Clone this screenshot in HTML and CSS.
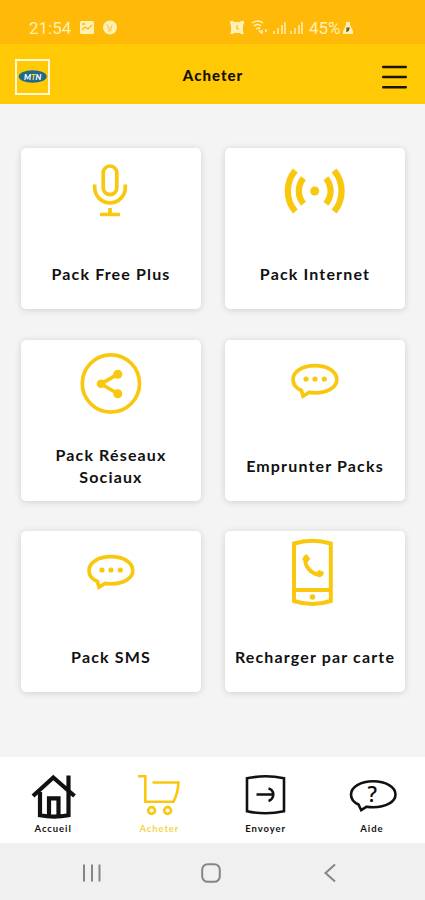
FILE: index.html
```html
<!DOCTYPE html>
<html lang="fr">
<head>
    <meta charset="UTF-8">
    <meta name="viewport" content="width=device-width, initial-scale=1.0">
    <title>Acheter</title>
    <link rel="stylesheet" href="styles.css">
</head>
<body>

    <div class="status-bar">
        <span class="time">21:54</span>
        <svg class="status-left" width="40" height="16" viewBox="0 0 40 16">
            <rect x="1" y="1" width="14" height="13" rx="1.5" fill="currentColor"/>
            <path d="M3 10l3-3 3 2 4-4M3 4h3" fill="none" stroke="#ffb908" stroke-width="1.3"/>
            <circle cx="31" cy="7.5" r="7" fill="currentColor"/>
            <path d="M28 4l2 5 2-1 1-3M29 11l4-1" fill="none" stroke="#ffd060" stroke-width="1.5"/>
        </svg>
        <svg class="status-right" width="78" height="16" viewBox="0 0 78 16">
            <path d="M1 1h3l1 1h6l1-1h3v3l-1 1v7l1 2h-3l-1-1H5l-1 1H1l1-2V5L1 4z" fill="currentColor"/>
            <path d="M8 5v4h2" fill="none" stroke="#ffb908" stroke-width="1.2"/>
            <path d="M23 3q6-4 11 0M25 6q4-3 7 0M27 9q3-2 4 0M30 10l2 3" fill="none" stroke="currentColor" stroke-width="1.5"/>
            <path d="M33 10v4M37 9v3M45 11v3M49 8v6M53 5v9M56 2v12M62 11v3M66 8v6M70 5v9M73 2v12" stroke="currentColor" stroke-width="1.5"/>
        </svg>
        <span class="battery">45%</span>
        <svg width="12" height="14" viewBox="0 0 12 14">
            <path d="M4 1h4v3l3 6v3H1v-3l3-6z" fill="currentColor"/>
            <path d="M5 11V7h2l-1 3" fill="none" stroke="#5b4b10" stroke-width="1.2"/>
        </svg>
    </div>

    <header class="header">
        <svg class="logo" width="35" height="36" viewBox="0 0 35 36">
            <rect x="1" y="1" width="33" height="34" fill="none" stroke="#fff8d8" stroke-width="2"/>
            <ellipse cx="17.7" cy="17.5" rx="14" ry="6.2" fill="#1f6a8c"/>
            <text class="logo-text" x="17.7" y="20.5" text-anchor="middle">M<tspan fill="#f5d34a">T</tspan>N</text>
        </svg>
        <h1 class="title">Acheter</h1>
        <svg class="menu" width="25" height="26" viewBox="0 0 25 26">
            <path d="M1.2 3h22.6M1.2 13h22.6M1.2 23.3h22.6" stroke="#1b1400" stroke-width="2.4" stroke-linecap="round"/>
        </svg>
    </header>

    <main class="packs">
        <div class="card">
            <svg class="card-icon" viewBox="0 0 80 80">
                <rect x="32.2" y="18" width="13.6" height="28.6" rx="6.8"/>
                <path d="M23.7 36.5v3a15.3 15.3 0 0 0 30.6 0v-3M39 60v6M29 66.5h20"/>
            </svg>
            <div class="label">Pack Free Plus</div>
        </div>
        <div class="card">
            <svg class="card-icon wifi" viewBox="0 0 80 80">
                <path d="M20.3 22.5a31.8 31.8 0 0 0 0 41M28.5 30.3a19.6 19.6 0 0 0 0 25.4M59.1 22.5a31.8 31.8 0 0 1 0 41M50.9 30.3a19.6 19.6 0 0 1 0 25.4"/>
                <circle class="fill" cx="39.7" cy="43" r="4.5"/>
            </svg>
            <div class="label">Pack Internet</div>
        </div>
        <div class="card">
            <svg class="card-icon" viewBox="0 0 80 80">
                <circle cx="39.9" cy="43.5" r="28.6"/>
                <path d="M46.4 34.3L30 43.8l16.4 9.7"/>
                <circle class="fill" cx="30" cy="43.8" r="4.3"/>
                <circle class="fill" cx="46.8" cy="34.3" r="4.5"/>
                <circle class="fill" cx="46.8" cy="53.7" r="4.5"/>
            </svg>
            <div class="label">Pack Réseaux<br>Sociaux</div>
        </div>
        <div class="card">
            <svg class="card-icon" viewBox="0 0 80 80">
                <path d="M26.5 50.5C21 48.2 18 44.4 18 39.5c0-8 9.5-13.8 22-13.8s21.8 5.8 21.8 13.8S52.5 52.8 40 52.8q-3 0-6-.4l-6 3.8z"/>
                <circle class="fill" cx="31" cy="39" r="2.6"/>
                <circle class="fill" cx="40" cy="39" r="2.6"/>
                <circle class="fill" cx="49.3" cy="39" r="2.6"/>
            </svg>
            <div class="label">Emprunter Packs</div>
        </div>
        <div class="card">
            <svg class="card-icon" viewBox="0 0 80 80">
                <path d="M26.5 50.5C21 48.2 18 44.4 18 39.5c0-8 9.5-13.8 22-13.8s21.8 5.8 21.8 13.8S52.5 52.8 40 52.8q-3 0-6-.4l-6 3.8z"/>
                <circle class="fill" cx="31" cy="39" r="2.6"/>
                <circle class="fill" cx="40" cy="39" r="2.6"/>
                <circle class="fill" cx="49.3" cy="39" r="2.6"/>
            </svg>
            <div class="label">Pack SMS</div>
        </div>
        <div class="card">
            <svg class="card-icon phone" viewBox="0 0 80 80">
                <path d="M19 12.5Q37.5 7 55.8 12.5V70Q37.5 76 19 70zM19 59h37"/>
                <circle class="fill" cx="37.5" cy="66" r="2.8"/>
                <path d="M31.5 28C27.5 33 37 45 46 43.5"/>
                <path class="fill" d="M27 29l2-4.5 3-1.2 3.2 4.5-3 4zM40.5 42l3.5-3 5 2-1 3.5-4 2z"/>
            </svg>
            <div class="label">Recharger par carte</div>
        </div>
    </main>

    <nav class="tabs">
        <a class="tab">
            <svg class="tab-icon home" viewBox="0 0 60 50">
                <path d="M10 26L30.3 7.5 51.5 26M17 22v23.3q14 2.5 28.5 0V5.5M26 46V28.3h9.5V46"/>
            </svg>
            Accueil
        </a>
        <a class="tab active">
            <svg class="tab-icon" viewBox="0 0 60 50">
                <path d="M9 6.3h7.3v25.4h28.2q4.5-9 5-19.2H23.500"/>
                <circle cx="22.6" cy="40.5" r="3.4"/>
                <circle cx="38.6" cy="40.5" r="3.4"/>
            </svg>
            Acheter
        </a>
        <a class="tab">
            <svg class="tab-icon" viewBox="0 0 60 50">
                <path d="M11 8.3q18.5-4 37 0v33q-18.5 4-37 0z"/>
                <path d="M20.500 24.500h17M32.500 18.500q4.500 1 4.800 6-.3 5-4.800 6.500"/>
            </svg>
            Envoyer
        </a>
        <a class="tab">
            <svg class="tab-icon" viewBox="0 0 60 50">
                <path d="M16.5 34.5C11.5 32.3 9 28.8 9 24.5 9 17 18.5 11.3 31.2 11.3S53.5 17 53.5 24.5 43.8 37.2 31.2 37.2q-3.5 0-6.5-.5l-5.500 3.500z"/>
                <text class="question" x="30.3" y="32" text-anchor="middle">?</text>
            </svg>
            Aide
        </a>
    </nav>

    <div class="system-nav">
        <svg width="20" height="20" viewBox="0 0 20 20">
            <path d="M2 1.5v17M10 1.5v17M17.5 1.5v17"/>
        </svg>
        <svg width="20" height="20" viewBox="0 0 20 20">
            <rect x="1.2" y="1.2" width="17.6" height="17.6" rx="5.5"/>
        </svg>
        <svg width="20" height="20" viewBox="0 0 20 20">
            <path d="M15 1.5L5.5 10l9.5 8.5"/>
        </svg>
    </div>

</body>
</html>
```
FILE: styles.css
```css
* {
    box-sizing: border-box;
}
body {
    margin: 0;
    width: 425px;
    height: 900px;
    display: flex;
    flex-direction: column;
    overflow: hidden;
    background: #f4f4f4;
    font-family: Lato, sans-serif;
    color: #111;
}
.status-bar {
    height: 44px;
    display: flex;
    align-items: center;
    padding: 12px 0 0 29px;
    background: #ffb908;
    color: #fff0b5;
    font: 17px Roboto, sans-serif;
}
.time {
    width: 50px;
}
.status-right {
    margin-left: 110px;
}
.battery {
    width: 33px;
    margin-left: 2px;
}
.header {
    height: 60px;
    display: flex;
    align-items: center;
    justify-content: space-between;
    padding: 6px 18px 0 15px;
    background: #ffc905;
}
.title {
    margin: 0;
    padding: 0 6px 5px 0;
    font-size: 15px;
    font-weight: 900;
    letter-spacing: 1px;
    color: #171000;
}
.logo-text {
    font: italic 900 8px Lato, sans-serif;
    fill: #fff;
}
.packs {
    flex: 1;
    display: grid;
    grid-template-columns: 180px 180px;
    grid-auto-rows: 161px;
    gap: 30.5px 24px;
    padding: 44.3px 20px 0 21px;
}
.card {
    display: flex;
    flex-direction: column;
    align-items: center;
    background: #fff;
    border-radius: 5px;
    box-shadow: 0 1px 7px rgba(0, 0, 0, 0.15);
}
.card-icon {
    width: 80px;
    height: 80px;
    fill: none;
    stroke: #f9c80e;
    stroke-width: 3.7;
}
.card-icon .fill {
    fill: #f9c80e;
    stroke: none;
}
.wifi {
    stroke-width: 6.3;
}
.phone {
    stroke-width: 4;
}
.label {
    height: 44px;
    margin-top: 24px;
    display: flex;
    align-items: center;
    text-align: center;
    white-space: nowrap;
    font-size: 16px;
    font-weight: 700;
    line-height: 22px;
    letter-spacing: 1.15px;
}
.tabs {
    height: 86px;
    display: grid;
    grid-template-columns: repeat(4, 1fr);
    padding-top: 13px;
    background: #fff;
}
.tab {
    display: flex;
    flex-direction: column;
    align-items: center;
    gap: 2px;
    font-size: 9.5px;
    font-weight: 700;
    line-height: 14px;
    letter-spacing: 0.9px;
}
.tab-icon {
    width: 60px;
    height: 50px;
    fill: none;
    stroke: #111;
    stroke-width: 2.6;
}
.home {
    stroke-width: 4.2;
}
.active {
    color: #f9d34a;
}
.active .tab-icon {
    stroke: #f9c80e;
}
.question {
    font: 600 21px "Open Sans", sans-serif;
    letter-spacing: 0;
    fill: #111;
    stroke: none;
}
.system-nav {
    height: 57px;
    display: flex;
    justify-content: center;
    gap: 99px;
    padding: 20px 3px 0 0;
    background: #f0f0f0;
}
.system-nav svg {
    fill: none;
    stroke: #858585;
    stroke-width: 2;
}
```
